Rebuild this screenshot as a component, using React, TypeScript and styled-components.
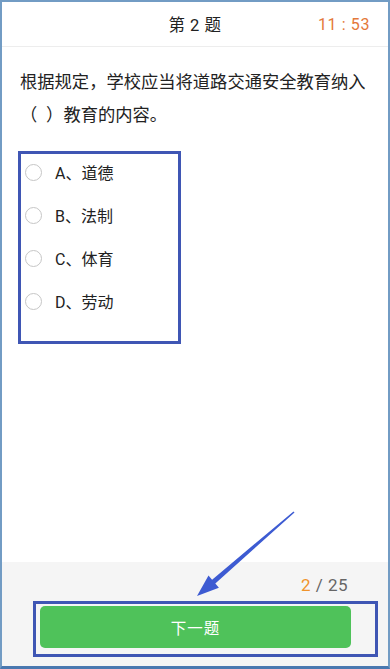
import styled, { createGlobalStyle } from 'styled-components';

const GlobalStyle = createGlobalStyle`
  html, body {
    margin: 0;
    padding: 0;
    background: #ffffff;
  }
  body {
    font-family: Roboto, "Noto Sans CJK SC", sans-serif;
    color: #222222;
  }
`;

const Frame = styled.div`
  position: relative;
  width: 390px;
  height: 669px;
  box-sizing: border-box;
  border: 2px solid #729cc4;
  border-bottom: 3px solid #4a78b0;
  display: flex;
  flex-direction: column;
  background: #ffffff;
  overflow: hidden;
`;

const Header = styled.div`
  height: 44px;
  flex-shrink: 0;
  display: grid;
  grid-template-columns: 1fr auto 1fr;
  align-items: center;
  border-bottom: 1px solid #ededed;
`;

const Title = styled.div`
  grid-column: 2;
  font-size: 16.5px;
  color: #222;
  letter-spacing: 0.5px;
`;

const Timer = styled.div`
  grid-column: 3;
  justify-self: end;
  padding-right: 18px;
  font-size: 16px;
  color: #e4783a;
  letter-spacing: 0.6px;
`;

const Question = styled.div`
  margin: 19px 16px 0 18px;
  font-size: 17.3px;
  line-height: 33px;
  color: #222;
`;

const OptionsBox = styled.div`
  margin: 19px 0 0 16px;
  width: 163px;
  height: 193px;
  box-sizing: border-box;
  border: 3px solid #3f56b4;
  padding: 0 0 0 4px;
  display: flex;
  flex-direction: column;
  gap: 7px;
`;

const OptionRow = styled.div`
  height: 36px;
  display: flex;
  align-items: center;
  gap: 13px;
  font-size: 16px;
  color: #222;
`;

const Radio = styled.span`
  width: 17px;
  height: 17px;
  box-sizing: border-box;
  border-radius: 50%;
  border: 1.5px solid #c6c6c6;
  flex-shrink: 0;
`;

const Spacer = styled.div`
  flex: 1;
`;

const Footer = styled.div`
  height: 104px;
  flex-shrink: 0;
  background: #f5f5f5;
  display: flex;
  flex-direction: column;
  padding-top: 11px;
  box-sizing: border-box;
`;

const Counter = styled.div`
  align-self: flex-end;
  padding-right: 40px;
  font-size: 17px;
  line-height: 24px;
  color: #666;
  letter-spacing: 0.5px;
`;

const Current = styled.span`
  color: #f0932b;
`;

const ButtonFrame = styled.div`
  margin: 4px 10px 0 31px;
  height: 56px;
  box-sizing: border-box;
  border: 3px solid #3f56b4;
  padding: 2px 24px 6px 4px;
  display: flex;
`;

const NextButton = styled.button`
  flex: 1;
  border: none;
  border-radius: 5px;
  background: #4fc25a;
  color: #ffffff;
  font-family: "Noto Sans CJK SC", sans-serif;
  font-size: 15.5px;
  letter-spacing: 1px;
`;

const Arrow = styled.svg`
  position: absolute;
  left: -2px;
  top: -2px;
  pointer-events: none;
`;

const options = ['A、道德', 'B、法制', 'C、体育', 'D、劳动'];

export default function App() {
  return (
    <>
      <GlobalStyle />
      <Frame>
        <Header>
          <Title>第 2 题</Title>
          <Timer>11 : 53</Timer>
        </Header>
        <Question>
          根据规定，学校应当将道路交通安全教育纳入
          <br />（{'\u2002'}）教育的内容。
        </Question>
        <OptionsBox>
          {options.map((o) => (
            <OptionRow key={o}>
              <Radio />
              <span>{o}</span>
            </OptionRow>
          ))}
        </OptionsBox>
        <Spacer />
        <Footer>
          <Counter>
            <Current>2</Current> / 25
          </Counter>
          <ButtonFrame>
            <NextButton>下一题</NextButton>
          </ButtonFrame>
        </Footer>
        <Arrow width="390" height="669" viewBox="0 0 390 669">
          <polygon
            points="293.5,511.4 212.1,579.7 208.5,575.5 197,596 218.9,587.7 215.3,583.5 294.5,512.6"
            fill="#3d5bd2"
          />
        </Arrow>
      </Frame>
    </>
  );
}
